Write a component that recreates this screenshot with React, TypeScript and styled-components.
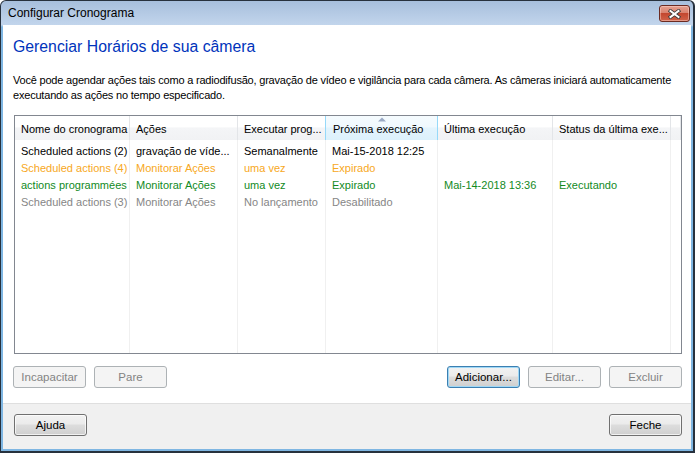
import styled, { createGlobalStyle } from "styled-components";

const GlobalStyle = createGlobalStyle`
  html, body { margin: 0; padding: 0; background: #ffffff; }
  body { font-family: "Liberation Sans", Arial, sans-serif; font-size: 11px; color: #000; }
  * { box-sizing: border-box; }
`;

const Window = styled.div`
  width: 695px;
  height: 453px;
  border: 1px solid #27313d;
  border-right-width: 2px;
  border-bottom-width: 2px;
  border-radius: 6px 6px 0 0;
  background: linear-gradient(#a7bfdc, #c2d5ec 24px, #7fb6e2 26px, #7fb6e2);
  display: flex;
  flex-direction: column;
  overflow: hidden;
`;

const TitleBar = styled.div`
  height: 24px;
  flex: none;
  display: flex;
  align-items: flex-start;
  justify-content: space-between;
  padding: 0 3px 0 7px;
`;

const Title = styled.span`
  line-height: 24px;
  font-size: 12px;
  color: #000;
`;

const CloseButton = styled.button`
  margin-top: 4px;
  width: 31px;
  height: 17px;
  padding: 0;
  border: 1px solid #6b2b22;
  border-radius: 3px;
  background: linear-gradient(#e6a190 0%, #d9826f 45%, #c3472f 50%, #d0634a 100%);
  box-shadow: inset 0 0 0 1px rgba(255, 220, 210, 0.45);
  display: flex;
  align-items: center;
  justify-content: center;
`;

const Client = styled.div`
  flex: 1;
  margin: 0 2px 2px 2px;
  background: #ffffff;
  display: flex;
  flex-direction: column;
`;

const Body = styled.div`
  flex: 1;
  display: flex;
  flex-direction: column;
  padding: 0 9px 0 10px;
`;

const Heading = styled.h1`
  margin: 12px 0 0;
  font-size: 15.8px;
  line-height: 20px;
  font-weight: normal;
  color: #0033bb;
`;

const Description = styled.p`
  margin: 16px 0 0;
  line-height: 15px;
  letter-spacing: -0.2px;
  white-space: nowrap;
`;

const ListView = styled.div`
  flex: 1;
  margin: 12px 0 0 1px;
  border: 1px solid #828790;
  background: #ffffff;
  display: flex;
  flex-direction: column;
`;

const grid = `115px 108px 88px 112px 115px 118px 1fr`;

const HeaderRow = styled.div`
  height: 24px;
  display: grid;
  grid-template-columns: ${grid};
  background: linear-gradient(#ffffff 0%, #ffffff 45%, #f4f5f7 50%, #f1f2f4 100%);
`;

const HeaderCell = styled.div<{ $sorted?: boolean }>`
  position: relative;
  padding: 2px 0 0 6px;
  line-height: 22px;
  white-space: nowrap;
  overflow: hidden;
  border-right: 1px solid ${(p) => (p.$sorted ? "#96d9f9" : "#e3e5e8")};
  ${(p) =>
    p.$sorted &&
    `
    margin-left: -1px;
    padding-left: 7px;
    border-left: 1px solid #96d9f9;
    background: linear-gradient(#f5fbfe 0%, #f0f9fe 45%, #e3f4fd 50%, #dcf1fc 100%);
  `}
`;

const SortArrow = styled.svg`
  position: absolute;
  top: 1px;
  left: 50%;
  margin-left: -4px;
`;

const Rows = styled.div`
  flex: 1;
  display: flex;
  flex-direction: column;
`;

const tones = {
  normal: "#000000",
  warning: "#f7a823",
  active: "#128a1e",
  disabled: "#868686",
};

type Tone = keyof typeof tones;

const Row = styled.div<{ $tone: Tone }>`
  display: grid;
  grid-template-columns: ${grid};
  color: ${(p) => tones[p.$tone]};
  &:first-child > div {
    padding-top: 3px;
  }
`;

const Filler = styled.div`
  flex: 1;
  display: grid;
  grid-template-columns: ${grid};
`;

const Cell = styled.div`
  padding-left: 6px;
  line-height: 17px;
  white-space: nowrap;
  overflow: hidden;
  border-right: 1px solid #f0f0f0;
  &:last-child {
    border-right: none;
  }
`;

const ButtonRow = styled.div`
  display: flex;
  gap: 8px;
  margin: 12px 0 15px;
`;

const Spacer = styled.div`
  flex: 1;
`;

const Button = styled.button<{ $variant?: "disabled" | "default" }>`
  width: 73px;
  height: 22px;
  padding: 0;
  font-family: inherit;
  font-size: 11.5px;
  border-radius: 3px;
  color: #000;
  border: 1px solid #707070;
  background: linear-gradient(#f2f2f2 0%, #ebebeb 45%, #dddddd 50%, #cfcfcf 100%);
  box-shadow: inset 0 0 0 1px rgba(255, 255, 255, 0.7);
  ${(p) =>
    p.$variant === "disabled" &&
    `
    color: #838383;
    border-color: #adb2b5;
    background: #f4f4f4;
    box-shadow: none;
  `}
  ${(p) =>
    p.$variant === "default" &&
    `
    border-color: #3c7fb1;
    box-shadow: inset 0 0 0 1px #9fd8f6;
  `}
`;

const Footer = styled.div`
  height: 46px;
  flex: none;
  display: flex;
  justify-content: space-between;
  align-items: flex-start;
  padding: 10px 9px 0 11px;
  background: #f0f0f0;
  border-top: 1px solid #dfdfdf;
`;

const columns = [
  { title: "Nome do cronograma" },
  { title: "Ações" },
  { title: "Executar prog..." },
  { title: "Próxima execução", sorted: true },
  { title: "Última execução" },
  { title: "Status da última exe..." },
];

const rows: { tone: Tone; cells: string[] }[] = [
  { tone: "normal", cells: ["Scheduled actions (2)", "gravação de víde...", "Semanalmente", "Mai-15-2018 12:25", "", ""] },
  { tone: "warning", cells: ["Scheduled actions (4)", "Monitorar Ações", "uma vez", "Expirado", "", ""] },
  { tone: "active", cells: ["actions programmées", "Monitorar Ações", "uma vez", "Expirado", "Mai-14-2018 13:36", "Executando"] },
  { tone: "disabled", cells: ["Scheduled actions (3)", "Monitorar Ações", "No lançamento", "Desabilitado", "", ""] },
];

const CloseIcon = () => (
  <svg width="13" height="10" viewBox="0 0 13 10">
    <path d="M2.5 2 L10.5 8 M10.5 2 L2.5 8" stroke="#3b3b3b" strokeWidth="3.6" strokeLinecap="square" />
    <path d="M2.5 2 L10.5 8 M10.5 2 L2.5 8" stroke="#ffffff" strokeWidth="2" strokeLinecap="square" />
  </svg>
);

const App = () => {
  return (
    <>
      <GlobalStyle />
      <Window>
        <TitleBar>
          <Title>Configurar Cronograma</Title>
          <CloseButton aria-label="Fechar">
            <CloseIcon />
          </CloseButton>
        </TitleBar>
        <Client>
          <Body>
            <Heading>Gerenciar Horários de sua câmera</Heading>
            <Description>
              Você pode agendar ações tais como a radiodifusão, gravação de vídeo e vigilância para cada câmera. As câmeras iniciará automaticamente
              <br />
              executando as ações no tempo especificado.
            </Description>
            <ListView>
              <HeaderRow>
                {columns.map((c) => (
                  <HeaderCell key={c.title} $sorted={c.sorted}>
                    {c.sorted && (
                      <SortArrow width="8" height="5" viewBox="0 0 8 5">
                        <path d="M0 4.5 L4 0.5 L8 4.5 Z" fill="#9aa9c4" />
                      </SortArrow>
                    )}
                    {c.title}
                  </HeaderCell>
                ))}
                <HeaderCell />
              </HeaderRow>
              <Rows>
                {rows.map((r, i) => (
                  <Row key={i} $tone={r.tone}>
                    {r.cells.map((text, j) => (
                      <Cell key={j}>{text}</Cell>
                    ))}
                    <Cell />
                  </Row>
                ))}
                <Filler>
                  {columns.map((c) => (
                    <Cell key={c.title} />
                  ))}
                  <Cell />
                </Filler>
              </Rows>
            </ListView>
            <ButtonRow>
              <Button $variant="disabled">Incapacitar</Button>
              <Button $variant="disabled">Pare</Button>
              <Spacer />
              <Button $variant="default">Adicionar...</Button>
              <Button $variant="disabled">Editar...</Button>
              <Button $variant="disabled">Excluir</Button>
            </ButtonRow>
          </Body>
          <Footer>
            <Button>Ajuda</Button>
            <Button>Feche</Button>
          </Footer>
        </Client>
      </Window>
    </>
  );
};

export default App;
